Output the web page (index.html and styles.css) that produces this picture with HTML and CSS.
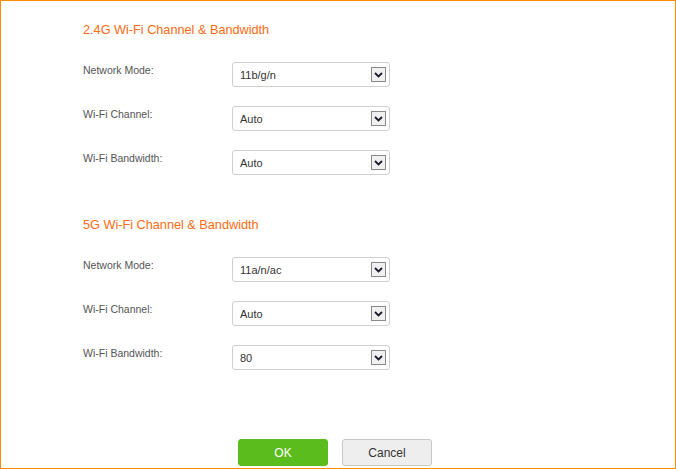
FILE: index.html
```html
<!DOCTYPE html>
<html>
<head>
<meta charset="utf-8">
<link rel="stylesheet" href="styles.css">
</head>
<body>
<div class="panel">
  <section class="group">
    <h2 class="group-title">2.4G Wi-Fi Channel &amp; Bandwidth</h2>
    <div class="rows">
      <div class="row">
        <label class="row-label">Network Mode:</label>
        <div class="select"><span class="select-value">11b/g/n</span><span class="select-btn"><svg viewBox="0 0 9 6" width="9" height="6"><path d="M1 1 L4.5 4.5 L8 1" fill="none" stroke="#1a1a2e" stroke-width="1.8"/></svg></span></div>
      </div>
      <div class="row">
        <label class="row-label">Wi-Fi Channel:</label>
        <div class="select"><span class="select-value">Auto</span><span class="select-btn"><svg viewBox="0 0 9 6" width="9" height="6"><path d="M1 1 L4.5 4.5 L8 1" fill="none" stroke="#1a1a2e" stroke-width="1.8"/></svg></span></div>
      </div>
      <div class="row">
        <label class="row-label">Wi-Fi Bandwidth:</label>
        <div class="select"><span class="select-value">Auto</span><span class="select-btn"><svg viewBox="0 0 9 6" width="9" height="6"><path d="M1 1 L4.5 4.5 L8 1" fill="none" stroke="#1a1a2e" stroke-width="1.8"/></svg></span></div>
      </div>
    </div>
  </section>
  <section class="group group-second">
    <h2 class="group-title">5G Wi-Fi Channel &amp; Bandwidth</h2>
    <div class="rows">
      <div class="row">
        <label class="row-label">Network Mode:</label>
        <div class="select"><span class="select-value">11a/n/ac</span><span class="select-btn"><svg viewBox="0 0 9 6" width="9" height="6"><path d="M1 1 L4.5 4.5 L8 1" fill="none" stroke="#1a1a2e" stroke-width="1.8"/></svg></span></div>
      </div>
      <div class="row">
        <label class="row-label">Wi-Fi Channel:</label>
        <div class="select"><span class="select-value">Auto</span><span class="select-btn"><svg viewBox="0 0 9 6" width="9" height="6"><path d="M1 1 L4.5 4.5 L8 1" fill="none" stroke="#1a1a2e" stroke-width="1.8"/></svg></span></div>
      </div>
      <div class="row">
        <label class="row-label">Wi-Fi Bandwidth:</label>
        <div class="select"><span class="select-value">80</span><span class="select-btn"><svg viewBox="0 0 9 6" width="9" height="6"><path d="M1 1 L4.5 4.5 L8 1" fill="none" stroke="#1a1a2e" stroke-width="1.8"/></svg></span></div>
      </div>
    </div>
  </section>
  <div class="actions">
    <button class="btn btn-ok">OK</button>
    <button class="btn btn-cancel">Cancel</button>
  </div>
</div>
</body>
</html>
```

FILE: styles.css
```css
html, body {
  margin: 0;
  padding: 0;
  background: #fff;
}
body {
  font-family: "Liberation Sans", Arial, sans-serif;
}
.panel {
  width: 676px;
  height: 469px;
  box-sizing: border-box;
  border: 1px solid #ff8a00;
  padding: 20px 0 0 82px;
  display: flex;
  flex-direction: column;
}
.group-title {
  margin: 0;
  font-size: 12.7px;
  line-height: 18px;
  font-weight: normal;
  color: #ff6a10;
}
.group-second {
  margin-top: 41px;
}
.rows {
  margin-top: 23px;
  display: flex;
  flex-direction: column;
  gap: 19px;
}
.row {
  display: flex;
  align-items: flex-start;
}
.row-label {
  width: 149px;
  padding-top: 1px;
  font-size: 10.5px;
  line-height: 14px;
  color: #555;
}
.select {
  width: 158px;
  height: 25px;
  box-sizing: border-box;
  border: 1px solid #cfcfcf;
  border-radius: 3px;
  display: flex;
  align-items: center;
  justify-content: space-between;
  padding: 0 3px 0 7px;
}
.select-value {
  font-size: 11px;
  color: #333;
}
.select-btn {
  width: 15px;
  height: 15px;
  box-sizing: border-box;
  border: 1px solid #8a8a8a;
  background: #f0f0f0;
  display: flex;
  align-items: center;
  justify-content: center;
}
.select-btn svg {
  display: block;
}
.actions {
  margin-top: 69px;
  margin-left: 155px;
  display: flex;
  gap: 14px;
}
.btn {
  width: 90px;
  height: 27px;
  box-sizing: border-box;
  border-radius: 3px;
  font-family: "Liberation Sans", Arial, sans-serif;
  font-size: 12px;
  padding: 0;
}
.btn-ok {
  background: #5bbd1d;
  border: 1px solid #5bbd1d;
  color: #fff;
}
.btn-cancel {
  background: #eeeeee;
  border: 1px solid #c8c8c8;
  color: #333;
}
```
